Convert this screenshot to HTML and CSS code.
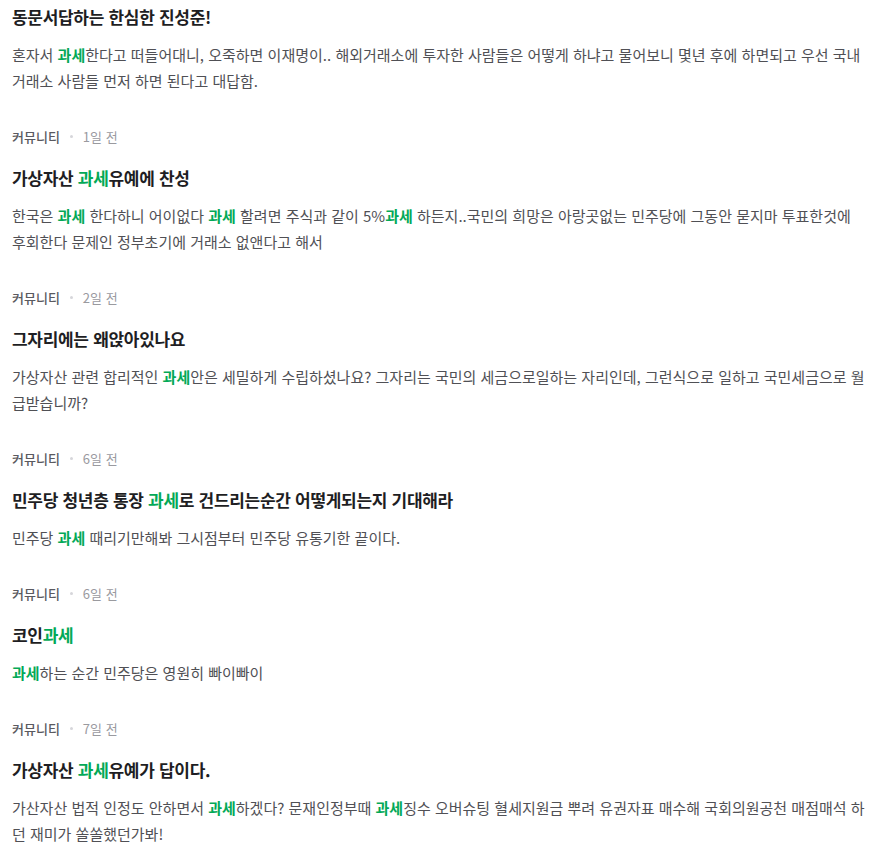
FILE: index.html
```html
<!DOCTYPE html>
<html lang="ko">
<head>
  <meta charset="UTF-8" />
  <meta name="viewport" content="width=device-width, initial-scale=1.0" />
  <title>커뮤니티 검색 결과</title>
  <link rel="stylesheet" href="styles.css">
</head>
<body>
  <ul class="feed">
    <li class="post">
      <h3 class="title">동문서답하는 한심한 진성준!</h3>
      <p class="desc">혼자서 <em>과세</em>한다고 떠들어대니, 오죽하면 이재명이.. 해외거래소에 투자한 사람들은 어떻게 하냐고 물어보니 몇년 후에 하면되고 우선 국내 거래소 사람들 먼저 하면 된다고 대답함.</p>
    </li>

    <li class="post">
      <div class="meta"><span class="source">커뮤니티</span><span class="date">1일 전</span></div>
      <h3 class="title">가상자산 <em>과세</em>유예에 찬성</h3>
      <p class="desc">한국은 <em>과세</em> 한다하니 어이없다 <em>과세</em> 할려면 주식과 같이 5%<em>과세</em> 하든지..국민의 희망은 아랑곳없는 민주당에 그동안 묻지마 투표한것에 후회한다 문제인 정부초기에 거래소 없앤다고 해서</p>
    </li>

    <li class="post">
      <div class="meta"><span class="source">커뮤니티</span><span class="date">2일 전</span></div>
      <h3 class="title">그자리에는 왜앉아있나요</h3>
      <p class="desc">가상자산 관련 합리적인 <em>과세</em>안은 세밀하게 수립하셨나요? 그자리는 국민의 세금으로일하는 자리인데, 그런식으로 일하고 국민세금으로 월급받습니까?</p>
    </li>

    <li class="post">
      <div class="meta"><span class="source">커뮤니티</span><span class="date">6일 전</span></div>
      <h3 class="title">민주당 청년층 통장 <em>과세</em>로 건드리는순간 어떻게되는지 기대해라</h3>
      <p class="desc">민주당 <em>과세</em> 때리기만해봐 그시점부터 민주당 유통기한 끝이다.</p>
    </li>

    <li class="post">
      <div class="meta"><span class="source">커뮤니티</span><span class="date">6일 전</span></div>
      <h3 class="title">코인<em>과세</em></h3>
      <p class="desc"><em>과세</em>하는 순간 민주당은 영원히 빠이빠이</p>
    </li>

    <li class="post">
      <div class="meta"><span class="source">커뮤니티</span><span class="date">7일 전</span></div>
      <h3 class="title">가상자산 <em>과세</em>유예가 답이다.</h3>
      <p class="desc">가산자산 법적 인정도 안하면서 <em>과세</em>하겠다? 문재인정부때 <em>과세</em>징수 오버슈팅 혈세지원금 뿌려 유권자표 매수해 국회의원공천 매점매석 하던 재미가 쏠쏠했던가봐!</p>
    </li>
  </ul>
</body>
</html>
```

FILE: styles.css
```css
/* ---------- BASE ---------- */
*{margin:0;padding:0;box-sizing:border-box;}
html,body{
  background:#fff;
  font-family:'Noto Sans CJK KR','Noto Sans',sans-serif;
  color:#222;
}
body{padding:4px 12px 0;}

/* ---------- FEED ---------- */
.feed{list-style:none;}
.post{padding-bottom:21px;}
.post:first-child .title{margin-top:0;}

.meta{
  display:flex;align-items:center;
  font-size:13px;line-height:20px;
  margin-top:12px;
}
.meta .source{color:#5a5a60;font-weight:500;}
.meta .date{color:#9a9a9f;}
.meta .date::before{
  content:'';display:inline-block;
  width:3px;height:3px;border-radius:50%;
  background:#d6d6da;
  margin:0 10px 3px 10px;vertical-align:middle;
}

.title{
  font-size:17px;font-weight:700;line-height:26px;
  color:#1e1e23;
  margin-top:18px;
  letter-spacing:-0.3px;
}
.desc{
  font-size:15px;line-height:26px;
  color:#505055;
  margin-top:12px;
  letter-spacing:0;
}
em{font-style:normal;font-weight:700;color:#03a957;}
```
